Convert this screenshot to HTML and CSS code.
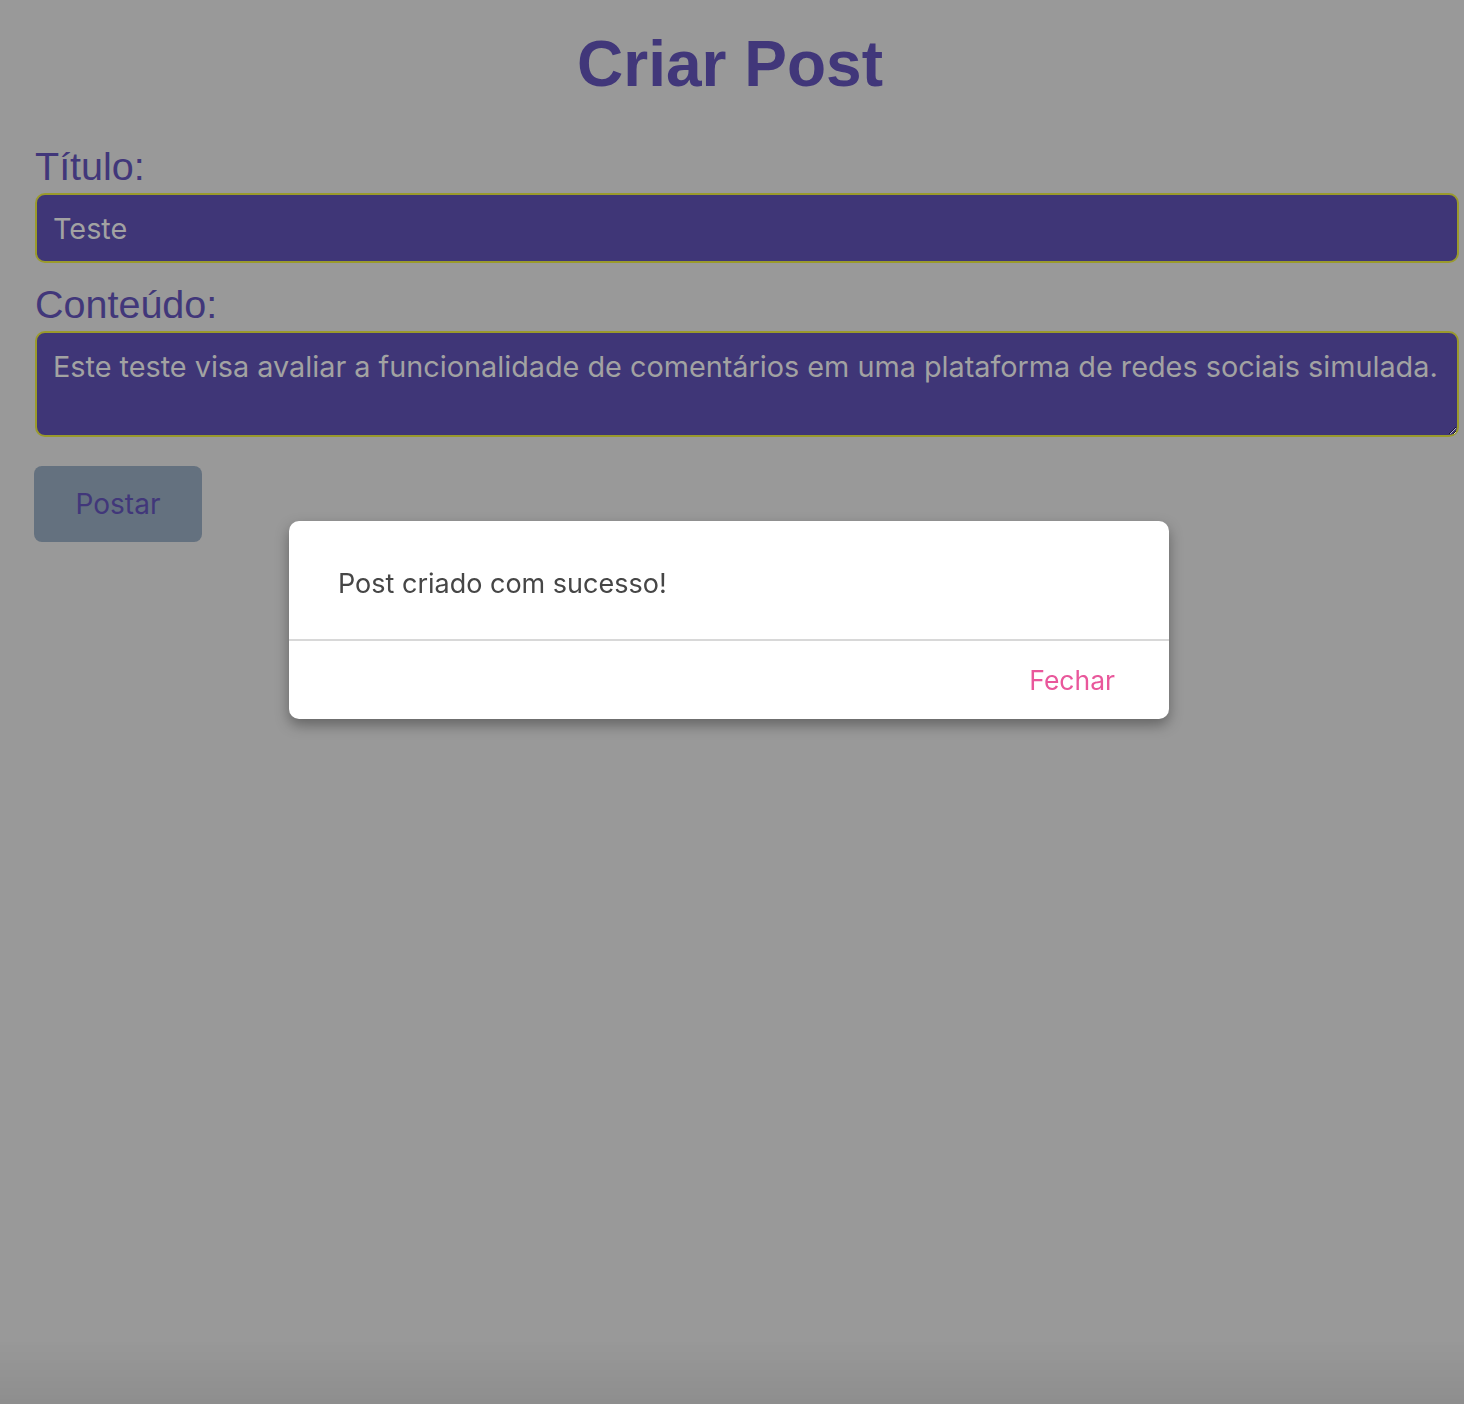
FILE: index.html
```html
<!DOCTYPE html>
<html lang="pt">
<head>
<meta charset="utf-8">
<title>Criar Post</title>
<link rel="stylesheet" href="styles.css">
</head>
<body>
<main class="page">
  <h1 class="title">Criar Post</h1>
  <form class="form">
    <label class="label" for="titulo">Título:</label>
    <input class="field" id="titulo" type="text" value="Teste">
    <label class="label label-second" for="conteudo">Conteúdo:</label>
    <textarea class="field area" id="conteudo">Este teste visa avaliar a funcionalidade de comentários em uma plataforma de redes sociais simulada.</textarea>
    <button class="btn" type="button">Postar</button>
  </form>
</main>
<div class="overlay">
  <div class="modal">
    <div class="modal-body">Post criado com sucesso!</div>
    <div class="modal-footer"><button class="modal-btn" type="button">Fechar</button></div>
  </div>
</div>
</body>
</html>
```

FILE: styles.css
```css
html, body {
  margin: 0;
  padding: 0;
}
body {
  width: 1464px;
  height: 1404px;
  overflow: hidden;
  background: #999999;
  font-family: "Liberation Sans", Arial, sans-serif;
}
.page {
  width: 1459px;
  padding-top: 32px;
  box-sizing: border-box;
}
.title {
  margin: 0;
  text-align: center;
  font-size: 64px;
  line-height: 1;
  font-weight: bold;
  color: #41377a;
  padding-left: 1px;
}
.form {
  display: flex;
  flex-direction: column;
  align-items: flex-start;
  padding-left: 35px;
  margin-top: 51px;
}
.label {
  font-size: 39.5px;
  line-height: 1;
  color: #41377a;
  height: 38px;
  margin-bottom: 8px;
}
.label-second {
  margin-top: 22px;
}
.field {
  width: 1424px;
  height: 70px;
  box-sizing: border-box;
  border: 2px solid #9a9a2c;
  border-radius: 10px;
  background: #3f3677;
  color: #a2a2a2;
  font-family: Inter, "Noto Sans", sans-serif;
  font-size: 28.8px;
  padding: 0 16px;
  margin: 0;
  outline: none;
}
.area {
  height: 106px;
  padding: 17px 4px 17px 16px;
  resize: vertical;
  line-height: 1.21;
}
.btn {
  margin-top: 29px;
  margin-left: -1px;
  width: 168px;
  height: 76px;
  border: none;
  border-radius: 8px;
  background: #64717f;
  color: #41377a;
  font-family: Inter, "Noto Sans", sans-serif;
  font-size: 28px;
  padding: 0;
}
.overlay {
  position: fixed;
  inset: 0;
  display: flex;
  justify-content: center;
  align-items: flex-start;
  padding-top: 521px;
  padding-right: 6px;
  box-sizing: border-box;
  background: linear-gradient(to bottom, rgba(0,0,0,0) 0, rgba(0,0,0,0) 1340px, rgba(0,0,0,0.07) 1404px);
}
.modal {
  width: 880px;
  height: 198px;
  background: #ffffff;
  border-radius: 10px;
  box-shadow: 0 6px 14px rgba(0,0,0,0.35);
  display: flex;
  flex-direction: column;
  font-family: Inter, "Noto Sans", sans-serif;
}
.modal-body {
  height: 120px;
  box-sizing: border-box;
  padding: 45px 49px 0;
  font-size: 27px;
  line-height: 36px;
  color: #464646;
  border-bottom: 2px solid #d8d8d8;
}
.modal-footer {
  flex: 1;
  display: flex;
  justify-content: flex-end;
  align-items: center;
  padding-right: 54px;
}
.modal-btn {
  border: none;
  background: none;
  padding: 0;
  font-family: Inter, "Noto Sans", sans-serif;
  font-size: 26.5px;
  color: #e9579b;
  line-height: 36px;
}
```
